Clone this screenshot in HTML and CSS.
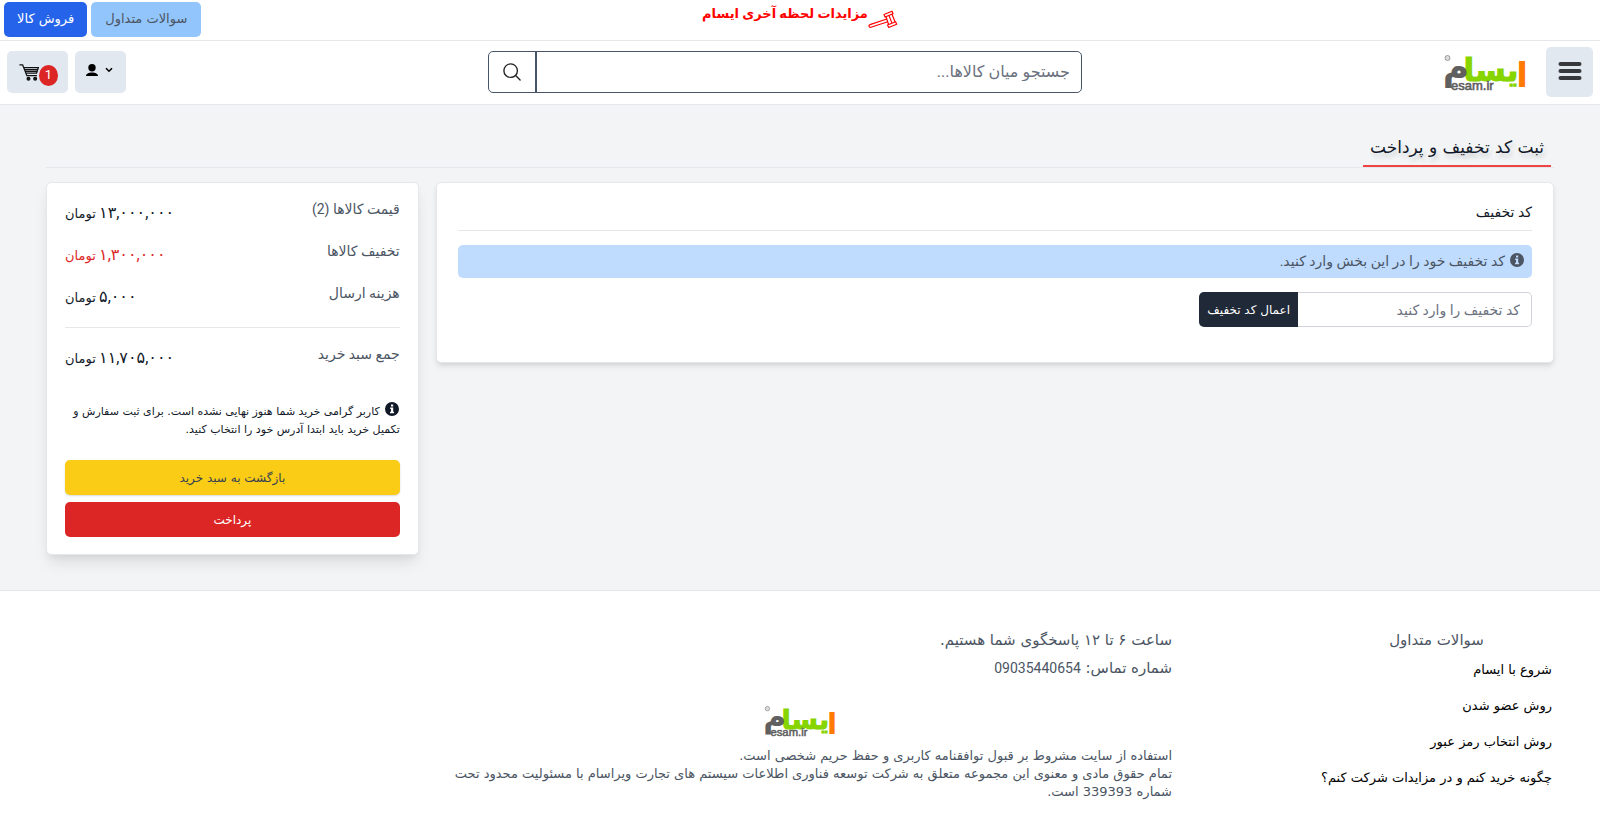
FILE: index.html
```html
<!DOCTYPE html>
<html lang="fa" dir="rtl">
<head>
<meta charset="utf-8">
<meta name="viewport" content="width=device-width, initial-scale=1">
<title>ثبت کد تخفیف و پرداخت</title>
<link rel="stylesheet" href="styles.css">
</head>
<body>
<div class="topbar">
  <a class="promo" href="#">
    <svg class="gavel" viewBox="0 0 30 20" fill="none" stroke="#f00" stroke-width="1.200" stroke-linejoin="round" stroke-linecap="round"><path d="M16 4.500l8-3.300 1 2.500-8 3.300zM19.500 15l8-3.300 1.200 2.500-8 3.300zM18 6.800l2.500 7.500M24 4.200l2.800 7M21 5.600l2.800 7M18.800 9L2 14.600c-1.800.7-1 3.300.9 2.700L19.800 11.800"/></svg>
    <strong>مزایدات لحظه آخری ایسام</strong>
  </a>
  <nav class="top-actions">
    <a class="btn faq" href="#">سوالات متداول</a>
    <a class="btn sell" href="#">فروش کالا</a>
  </nav>
</div>

<header class="header">
  <div class="brand">
    <button class="menu" type="button" aria-label="منو"><svg viewBox="0 0 24 20" fill="none" stroke="#37383c" stroke-width="4" stroke-linecap="round"><path d="M2.500 3h19M2.500 10h19M2.500 17h19"/></svg></button>
    <a href="#" aria-label="ایسام">
      <svg class="logo" viewBox="0 0 82 38">
        <circle cx="3.500" cy="3" r="2.500" fill="#ddd" stroke="#888" stroke-width=".8"/>
        <text class="mark orange" x="78" y="32">ا</text>
        <text class="mark green" x="47" y="26">یسا</text>
        <text class="mark gray" x="12" y="24">م</text>
        <text class="mark-latin" x="7" y="35">esam.ir</text>
      </svg>
    </a>
  </div>
  <form class="search">
    <input type="search" aria-label="جستجو" placeholder="جستجو میان کالاها...">
    <button type="button" aria-label="جستجو کن"><svg viewBox="0 0 20 20" fill="none" stroke="#222" stroke-width="1.500" stroke-linecap="round"><circle cx="8.500" cy="8.500" r="7.500"/><path d="M14 14l5 5"/></svg></button>
  </form>
  <div class="tools">
    <button class="user" type="button" aria-label="حساب کاربری">
      <svg class="chevron" viewBox="0 0 8 6" fill="none" stroke="#000" stroke-width="1.600"><path d="M1 1.200l3 3 3-3"/></svg>
      <svg class="person" viewBox="0 0 12 12"><circle cx="6" cy="3.800" r="3.700"/><path d="M0 12c0-2.300 2.500-3.500 6-3.500s6 1.200 6 3.500z"/></svg>
    </button>
    <button class="cart" type="button" aria-label="سبد خرید">
      <span class="count">1</span>
      <svg viewBox="0 0 18 16" fill="none" stroke="#111" stroke-width="1.200"><path d="M0 .8h3l4 10.200h9.500M4 3.500h13.800l-1.700 5H6M4.500 5.200h12.500M5 6.900h11.500"/><circle cx="8.500" cy="13.800" r="1.300" fill="#111"/><circle cx="14.800" cy="13.800" r="1.300" fill="#111"/></svg>
    </button>
  </div>
</header>

<main class="main">
  <div class="title-row"><h1>ثبت کد تخفیف و پرداخت</h1></div>
  <div class="columns">
    <section class="card discount">
      <h2>کد تخفیف</h2>
      <p class="hint"><svg class="info" viewBox="0 0 16 16"><path fill="currentColor" fill-rule="evenodd" d="M8 1a7 7 0 1 0 0 14A7 7 0 0 0 8 1zM7 3.600h2.200v2H7zM6.200 6.600h3v4.200h.9v1.500H6v-1.500h1V8.100h-.8z"/></svg>کد تخفیف خود را در این بخش وارد کنید.</p>
      <form class="code">
        <input type="text" aria-label="کد تخفیف" placeholder="کد تخفیف را وارد کنید">
        <button type="button">اعمال کد تخفیف</button>
      </form>
    </section>
    <aside class="card summary">
      <dl>
        <div><dt>قیمت کالاها (2)</dt><dd><b>۱۳,۰۰۰,۰۰۰</b> تومان</dd></div>
        <div class="off"><dt>تخفیف کالاها</dt><dd><b>۱,۳۰۰,۰۰۰</b> تومان</dd></div>
        <div><dt>هزینه ارسال</dt><dd><b>۵,۰۰۰</b> تومان</dd></div>
        <div class="total"><dt>جمع سبد خرید</dt><dd><b>۱۱,۷۰۵,۰۰۰</b> تومان</dd></div>
      </dl>
      <p class="note"><svg class="info" viewBox="0 0 16 16"><path fill="currentColor" fill-rule="evenodd" d="M8 1a7 7 0 1 0 0 14A7 7 0 0 0 8 1zM7 3.600h2.200v2H7zM6.200 6.600h3v4.200h.9v1.500H6v-1.500h1V8.100h-.8z"/></svg>کاربر گرامی خرید شما هنوز نهایی نشده است. برای ثبت سفارش و تکمیل خرید باید ابتدا آدرس خود را انتخاب کنید.</p>
      <button class="back" type="button">بازگشت به سبد خرید</button>
      <button class="pay" type="button">پرداخت</button>
    </aside>
  </div>
</main>

<footer class="footer">
  <nav class="faq-links">
    <h3>سوالات متداول</h3>
    <ul>
      <li><a href="#">شروع با ایسام</a></li>
      <li><a href="#">روش عضو شدن</a></li>
      <li><a href="#">روش انتخاب رمز عبور</a></li>
      <li><a href="#">چگونه خرید کنم و در مزایدات شرکت کنم؟</a></li>
    </ul>
  </nav>
  <div class="about">
    <p class="contact">ساعت ۶ تا ۱۲ پاسخگوی شما هستیم.</p>
    <p class="contact">شماره تماس: <span class="phone">09035440654</span></p>
    <svg class="logo small" viewBox="0 0 82 38">
      <circle cx="3.500" cy="3" r="2.500" fill="#ddd" stroke="#888" stroke-width=".8"/>
      <text class="mark orange" x="78" y="32">ا</text>
      <text class="mark green" x="47" y="26">یسا</text>
      <text class="mark gray" x="12" y="24">م</text>
      <text class="mark-latin" x="7" y="35">esam.ir</text>
    </svg>
    <p class="legal">استفاده از سایت مشروط بر قبول توافقنامه کاربری و حفظ حریم شخصی است.</p>
    <p class="legal">تمام حقوق مادی و معنوی این مجموعه متعلق به شرکت توسعه فناوری اطلاعات سیستم های تجارت ویراسام با مسئولیت محدود تحت شماره 339393 است.</p>
  </div>
</footer>
</body>
</html>
```
FILE: styles.css
```css
* { box-sizing: border-box; margin: 0; padding: 0; }
body { font-family: "DejaVu Sans", sans-serif; font-size: 13px; line-height: 18px; color: #111827; background: #fff; }
a { color: inherit; text-decoration: none; }
button, input { font: inherit; color: inherit; }
button { border: 0; cursor: pointer; }
ul { list-style: none; }
input::placeholder { color: #6b7280; opacity: 1; }
.promo, .hint, h2, dt, dd, .search, .code input, .count, .phone { font-family: Roboto, "DejaVu Sans", sans-serif; }
.info { width: 16px; height: 16px; vertical-align: -2px; margin-left: 4px; }

.mark { font-family: "DejaVu Sans", sans-serif; font-weight: bold; font-size: 31px; text-anchor: middle; }
.orange { font-size: 34px; fill: #ff7a00; }
.green { fill: #86d400; stroke: #86d400; stroke-width: 1; }
.gray { font-size: 36px; fill: #606060; }
.mark-latin { font: 13px "Liberation Sans", sans-serif; fill: #606060; stroke: #606060; stroke-width: .6; direction: ltr; }
.logo { display: block; width: 82px; height: 38px; overflow: visible; }
.logo.small { width: 72px; height: 33px; margin: 0 auto; }

.topbar { display: grid; grid-template-columns: 1fr auto 1fr; height: 41px; padding: 2px 4px; border-bottom: 1px solid #e5e7eb; }
.promo { grid-column: 2; display: flex; color: #f00; font-size: 13px; line-height: 24px; }
.promo strong { font-weight: 900; }
.gavel { width: 30px; height: 20px; margin-top: 8px; }
.top-actions { display: flex; justify-content: flex-end; gap: 4px; }
.btn { height: 35px; padding: 0 14px; border-radius: 5px; line-height: 34px; }
.faq { background: #93c5fd; color: #4b5563; }
.sell { padding: 0 13px; background: #2563eb; color: #fff; }

.header { display: flex; justify-content: space-between; height: 64px; padding: 0 7px; border-bottom: 1px solid #e5e7eb; }
.brand { display: flex; align-items: flex-start; gap: 20px; padding-top: 6px; }
.brand .logo { margin-top: 8px; }
.menu { width: 47px; height: 50px; border-radius: 5px; background: #e2e8f0; }
.menu svg { display: block; width: 24px; height: 20px; margin: 0 auto 2px; }
.search { display: flex; flex: 0 1 594px; height: 42px; margin-top: 10px; border: 1px solid #475569; border-radius: 5px; background: #fff; }
.search input { flex: 1; min-width: 0; padding: 0 11px; border: 0; background: none; font-size: 16px; }
.search button { width: 48px; border-right: 2px solid #475569; background: none; }
.search svg { width: 18px; height: 18px; vertical-align: middle; }
.tools { display: flex; justify-content: flex-end; gap: 7px; padding-top: 10px; }
.tools button { display: flex; height: 42px; border-radius: 5px; background: #e2e8f0; }
.user { width: 51px; padding: 13px 13px 0 11px; justify-content: space-between; }
.person { width: 12px; height: 12px; }
.chevron { width: 8px; height: 6px; margin-top: 3px; }
.cart { width: 61px; padding: 13px 10px 0; }
.cart svg { width: 20px; height: 17px; }
.count { width: 19px; height: 21px; margin-top: 1px; border-radius: 50%; background: #dc2626; color: #fff; line-height: 20px; }

.main { padding: 22px 46px 35px; background: #f3f4f6; border-bottom: 1px solid #e5e7eb; }
.title-row { display: flex; margin-bottom: 14px; padding-right: 3px; border-bottom: 1px solid #e5e7eb; }
h1 { padding: 2px 7px 0; border-bottom: 2px solid #ef4444; font-size: 17px; font-weight: 400; line-height: 36px; text-shadow: 2px 4px 4px rgba(0, 0, 0, .15); }
.columns { display: grid; grid-template-columns: 3fr 1fr; align-items: start; gap: 17px; }
.card { min-width: 0; border: 1px solid #e5e7eb; border-radius: 5px; background: #fff; }
.discount { padding: 20px 21px 35px; box-shadow: 0 4px 6px -1px rgba(0, 0, 0, .1), 0 2px 4px -1px rgba(0, 0, 0, .06); }
h2 { padding-bottom: 8px; border-bottom: 1px solid #e5e7eb; font-size: 14px; font-weight: 400; line-height: 19px; }
.hint { margin: 14px 0; padding: 0 7px; border-radius: 5px; background: #bfdbfe; color: #4b5563; font-size: 14px; line-height: 33px; }
.code { display: flex; height: 35px; }
.code input { width: 234px; padding: 0 11px; border: 1px solid #d1d5db; border-left: 0; border-radius: 0 5px 5px 0; font-size: 14px; }
.code button { padding: 0 8px; border-radius: 5px 0 0 5px; background: #1f2937; color: #fff; font-size: 12px; }

.summary { padding: 17px 18px; box-shadow: 0 10px 15px -3px rgba(0, 0, 0, .1), 0 4px 6px -2px rgba(0, 0, 0, .05); }
dl div { display: flex; justify-content: space-between; height: 42px; }
dt { color: #4b5563; font-size: 14px; }
dd { line-height: 26px; }
dd b { font-size: 16px; font-weight: 400; }
.off dd { color: #dc2626; }
dl .total { height: 74px; margin-top: 1px; padding-top: 17px; border-top: 1px solid #e5e7eb; }
.note { margin-bottom: 21px; font-size: 11px; }
.summary button { display: block; width: 100%; height: 35px; border-radius: 5px; font-size: 12px; }
.summary .back { margin-bottom: 7px; background: #facc15; color: #374151; box-shadow: 0 1px 2px rgba(0, 0, 0, .15); }
.summary .pay { background: #dc2626; color: #fff; }

.footer { display: grid; grid-template-columns: 1fr 2fr 1fr; gap: 8px; padding: 35px 48px 20px; color: #4b5563; }
.faq-links { justify-self: start; }
h3 { font-size: 15px; font-weight: 400; line-height: 28px; text-align: center; }
.faq-links li { padding: 7px 0 11px; color: #000; }
.contact { font-size: 15px; line-height: 28px; }
.phone { font-size: 14px; }
.about .logo { margin-top: 24px; margin-bottom: 8px; }
```
